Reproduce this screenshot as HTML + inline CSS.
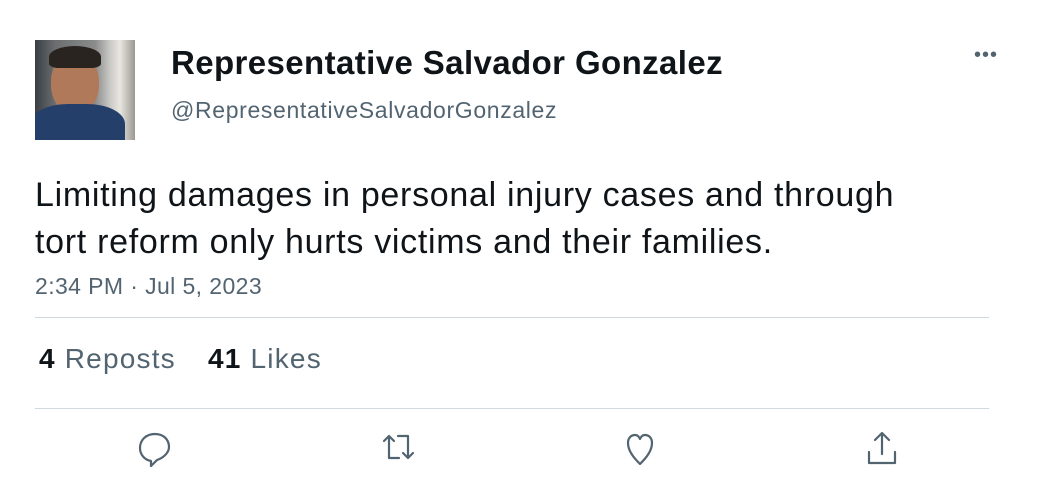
<!DOCTYPE html>
<html><head><style>
body{margin:0;background:#fff;width:1050px;height:480px;overflow:hidden;font-family:"Liberation Sans",Arial,sans-serif;position:relative}
.a{position:absolute;white-space:nowrap}
</style></head><body>
<div class="a" style="left:35px;top:40px;width:100px;height:100px;background:linear-gradient(90deg,#3a3f44 0%,#6b6e70 20%,#8a8c8b 60%,#c9c9c6 75%,#e8e6e0 85%,#9a9890 100%);overflow:hidden">
<div style="position:absolute;left:16px;top:14px;width:48px;height:60px;border-radius:45% 45% 48% 48%;background:#b07a5a"></div>
<div style="position:absolute;left:14px;top:6px;width:52px;height:22px;border-radius:50% 50% 20% 20%;background:#2a2420"></div>
<div style="position:absolute;left:-5px;top:64px;width:95px;height:50px;border-radius:40% 40% 0 0;background:#24406a"></div>
</div>
<div class="a" style="left:171px;top:44px;font-size:33px;letter-spacing:0.4px;font-weight:bold;color:#0f1419">Representative Salvador Gonzalez</div>
<div class="a" style="left:171px;top:97px;font-size:23px;letter-spacing:0.65px;color:#536471">@RepresentativeSalvadorGonzalez</div>
<div class="a" style="left:974px;top:44px;font-size:20px;color:#536471;letter-spacing:1px">•••</div>
<div class="a" style="left:35px;top:172px;font-size:34px;letter-spacing:0.7px;line-height:47px;color:#0f1419">Limiting damages in personal injury cases and through<br>tort reform only hurts victims and their families.</div>
<div class="a" style="left:35px;top:273px;font-size:23px;letter-spacing:0.4px;color:#536471">2:34 PM · Jul 5, 2023</div>
<div class="a" style="left:35px;top:317px;width:954px;height:1px;background:#cfd9de"></div>
<div class="a" style="left:39px;top:343px;font-size:28px;letter-spacing:1.2px;color:#536471"><b style="color:#0f1419">4</b> Reposts</div>
<div class="a" style="left:208px;top:343px;font-size:28px;letter-spacing:1.2px;color:#536471"><b style="color:#0f1419">41</b> Likes</div>
<div class="a" style="left:35px;top:408px;width:954px;height:1px;background:#cfd9de"></div>
<svg class="a" style="left:0;top:0" width="1050" height="480" fill="none" stroke="#536471" stroke-width="2.2" stroke-linecap="round" stroke-linejoin="round">
<path d="M155 434c-9 0-15 6-15 14 0 7 5 12 11 13v5l6-6c6-2 12-7 12-13 0-8-6-13-14-13z"/>
<path d="M389 436v22h10M384 441l5-5 5 5M398 436h10v22M403 453l5 5 5-5"/>
<path d="M640 464c-6-6-12-13-12-21 0-5 3-8 7-8 3 0 4 2 5 4 1-2 2-4 5-4 4 0 7 3 7 8 0 8-6 15-12 21z"/>
<path d="M882 434v20M875 440l7-7 7 7M869 452v11h26v-11"/>
</svg>
</body></html>
